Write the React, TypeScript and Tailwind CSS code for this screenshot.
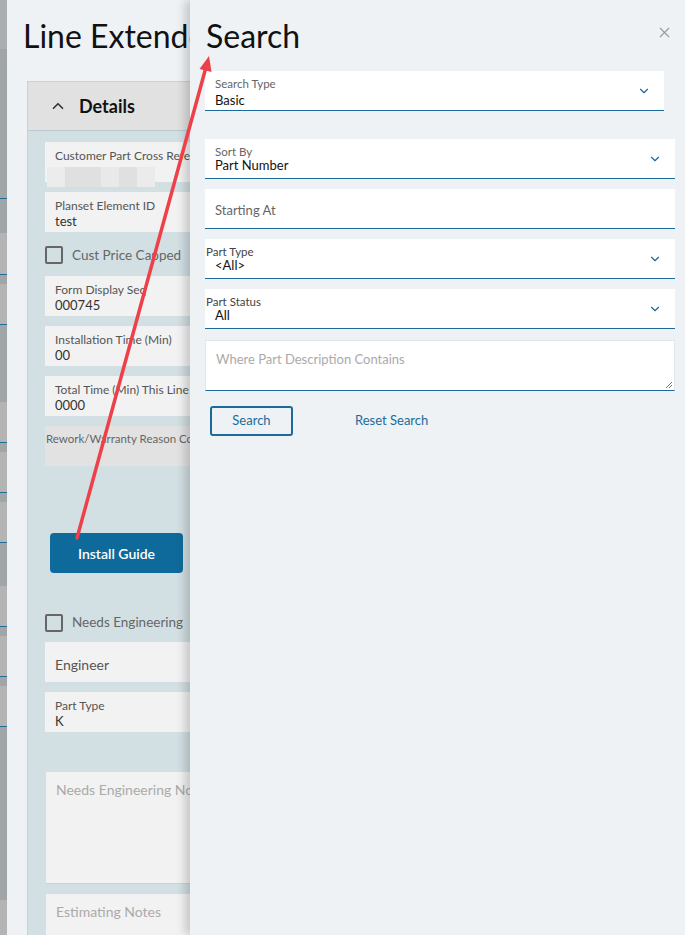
import { ChevronDown, ChevronUp, X } from 'lucide-react'

const FONT = { fontFamily: 'Lato, "Open Sans", sans-serif' }

// backdrop strip of the page underneath (left edge)
const STRIP: { h: number; c: string }[] = [
  { h: 49, c: '#acadae' }, { h: 149, c: '#a0a5a7' },
  { h: 35, c: '#a0a5a7' }, { h: 41, c: '#b4b4b4' },
  { h: 10, c: '#a0a5a7' }, { h: 40, c: '#b4b4b4' },
  { h: 78, c: '#a0a5a7' }, { h: 40, c: '#b4b4b4' },
  { h: 10, c: '#a0a5a7' }, { h: 40, c: '#b4b4b4' },
  { h: 10, c: '#a0a5a7' }, { h: 40, c: '#b4b4b4' },
  { h: 44, c: '#a0a5a7' }, { h: 40, c: '#b4b4b4' },
  { h: 10, c: '#a0a5a7' }, { h: 40, c: '#b4b4b4' },
  { h: 10, c: '#a0a5a7' }, { h: 40, c: '#b4b4b4' },
  { h: 174, c: '#a0a5a7' }, { h: 40, c: '#b4b4b4' },
]
const LINES_AT = [2, 4, 6, 8, 10, 12, 14, 16, 18]

function Field({ label, value, placeholder }: { label?: string; value?: string; placeholder?: string }) {
  return (
    <div className="h-[40px] bg-[#f2f2f2] pl-[10px] pt-[7px]">
      {placeholder ? (
        <p className="text-[14px] leading-[26px] text-[#555] pt-[3px]">{placeholder}</p>
      ) : (
        <>
          <p className="text-[12px] leading-[14px] text-[#555] whitespace-nowrap">{label}</p>
          <p className="text-[13px] leading-[16px] text-[#333]">{value}</p>
        </>
      )}
    </div>
  )
}

function Check({ label }: { label: string }) {
  return (
    <div className="flex items-center gap-[9px]">
      <span className="w-[18px] h-[18px] border-2 border-[#666] rounded-[2px]" />
      <span className="text-[13.5px] text-[#666] whitespace-nowrap">{label}</span>
    </div>
  )
}

function SelectBox({ label, value, flush, gap = -2 }: { label: string; value: string; flush?: boolean; gap?: number }) {
  return (
    <div className="h-[40px] bg-white border-b border-[#1b6a9b] flex items-center pr-[13px]">
      <div className={`flex-1 self-start pt-[6px] ${flush ? 'pl-[1px]' : 'pl-[10px]'}`}>
        <p className={`text-[11.5px] leading-[14px] ${flush ? 'text-[#444]' : 'text-[#666]'}`}>{label}</p>
        <p className={`text-[13px] leading-[17px] text-[#111] ${flush ? 'pl-[9px]' : ''}`} style={{ marginTop: gap }}>
          {value}
        </p>
      </div>
      <ChevronDown size={14} strokeWidth={2} className="text-[#1b6a9b]" />
    </div>
  )
}

export default function App() {
  return (
    <div className="relative h-[935px] w-[685px] overflow-hidden flex bg-[#eef2f5]" style={FONT}>
      {/* underlying page edge */}
      <div className="w-[7px] flex flex-col shrink-0">
        {STRIP.map((s, i) => (
          <div
            key={i}
            className={`shrink-0 ${LINES_AT.includes(i) ? 'border-t border-[#1f6c96]' : ''}`}
            style={{ height: s.h, background: s.c }}
          />
        ))}
      </div>

      {/* main modal content, cut by the drawer */}
      <div className="w-[183px] shrink-0 overflow-hidden">
        <div className="w-[660px] pl-[16px] pr-[20px]">
          <h1 className="text-[32px] leading-[38px] text-[#111] mt-[17px] whitespace-nowrap">Line Extended Detail</h1>
          <div className="mt-[26px] ml-[4px] border border-[#c9d2d6] bg-[#d2dfe3] h-[900px]">
            <div className="h-[49px] bg-[#e1e1e1] border-b border-[#b9cad0] flex items-center pl-[21px] gap-[12px]">
              <ChevronUp size={18} strokeWidth={2.2} className="text-[#333]" />
              <span className="text-[18px] font-bold text-[#111]">Details</span>
            </div>
            <div className="pl-[17px] pt-[11px] flex flex-col">
              <div className="h-[40px] bg-[#f2f2f2] pl-[10px] pt-[7px]">
                <p className="text-[12px] leading-[14px] text-[#555] whitespace-nowrap">Customer Part Cross Reference</p>
                <div className="flex mt-[4px] -ml-[8px]">
                  <span className="w-[18px] h-[20px] bg-[#ececec]" />
                  <span className="w-[36px] h-[20px] bg-[#e0e0e0]" />
                  <span className="w-[18px] h-[20px] bg-[#e9e9e9]" />
                  <span className="w-[18px] h-[20px] bg-[#e0e0e0]" />
                  <span className="w-[18px] h-[20px] bg-[#ebebeb]" />
                </div>
              </div>
              <div className="mt-[10px]"><Field label="Planset Element ID" value="test" /></div>
              <div className="h-[44px] flex items-center pt-[2px]"><Check label="Cust Price Capped" /></div>
              <Field label="Form Display Seq" value="000745" />
              <div className="mt-[10px]"><Field label="Installation Time (Min)" value="00" /></div>
              <div className="mt-[10px]"><Field label="Total Time (Min) This Line" value="0000" /></div>
              <div className="mt-[10px] h-[40px] bg-[#e2e2e2] pl-[1px] pt-[6px]">
                <p className="text-[11.5px] leading-[14px] text-[#666] whitespace-nowrap">Rework/Warranty Reason Code</p>
              </div>
              <button className="mt-[67px] ml-[5px] w-[133px] h-[40px] rounded-[4px] bg-[#0f6a9c] text-white text-[14px] font-semibold">
                Install Guide
              </button>
              <div className="h-[39px] mt-[30px] flex items-center"><Check label="Needs Engineering" /></div>
              <Field placeholder="Engineer" />
              <div className="mt-[10px]"><Field label="Part Type" value="K" /></div>
              <div className="mt-[40px] ml-[1px] h-[112px] bg-[#f2f2f2] border-b border-[#cfcfcf] pl-[10px] pt-[7px]">
                <p className="text-[14px] text-[#aaa] whitespace-nowrap">Needs Engineering Notes</p>
              </div>
              <div className="mt-[10px] ml-[1px] h-[60px] bg-[#f2f2f2] pl-[10px] pt-[7px]">
                <p className="text-[14px] text-[#aaa] whitespace-nowrap">Estimating Notes</p>
              </div>
            </div>
          </div>
        </div>
      </div>

      {/* search drawer */}
      <div className="absolute right-0 top-0 bottom-0 w-[495px] bg-[#eef2f5] shadow-[-5px_0_9px_rgba(0,0,0,0.18)] pl-[15px] pr-[10px]">
        <div className="flex items-start justify-between">
          <h2 className="text-[32px] leading-[38px] text-[#111] mt-[17px] pl-[1px]">Search</h2>
          <X size={17} strokeWidth={1.6} className="text-[#999] mt-[24px] mr-[2px]" />
        </div>
        <div className="mt-[16px] mr-[11px]"><SelectBox label="Search Type" value="Basic" gap={1} /></div>
        <div className="mt-[28px]"><SelectBox label="Sort By" value="Part Number" /></div>
        <div className="mt-[10px] h-[40px] bg-white border-b border-[#1b6a9b] pl-[10px] pt-[4px] flex items-center">
          <span className="text-[13px] text-[#666]">Starting At</span>
        </div>
        <div className="mt-[10px]"><SelectBox label="Part Type" value="<All>" flush /></div>
        <div className="mt-[10px]"><SelectBox label="Part Status" value="All" flush /></div>
        <div className="relative mt-[11px] h-[51px] bg-white border border-[#e2e6e8] border-b-[#1b6a9b] pl-[10px] pt-[5px]">
          <span className="text-[13px] leading-[18px] text-[#aaa]">Where Part Description Contains</span>
          <svg className="absolute right-[1px] bottom-[1px]" width="8" height="8" viewBox="0 0 8 8">
            <path d="M7 1 L1 7 M7 4 L4 7" stroke="#777" strokeWidth="1" />
          </svg>
        </div>
        <div className="mt-[15px] flex items-center pl-[5px]">
          <button className="w-[83px] h-[30px] border-2 border-[#1b6a9b] rounded-[3px] text-[13px] text-[#1b6a9b]">
            Search
          </button>
          <span className="ml-[62px] text-[13px] text-[#1b6a9b]">Reset Search</span>
        </div>
      </div>

      {/* annotation arrow */}
      <svg className="absolute inset-0 pointer-events-none" width="685" height="935">
        <line x1="77" y1="538" x2="205.5" y2="69" stroke="#ee4049" strokeWidth="3.5" strokeLinecap="round" />
        <polygon points="209,56 211.5,72 199.5,69" fill="#ee4049" />
      </svg>
    </div>
  )
}
